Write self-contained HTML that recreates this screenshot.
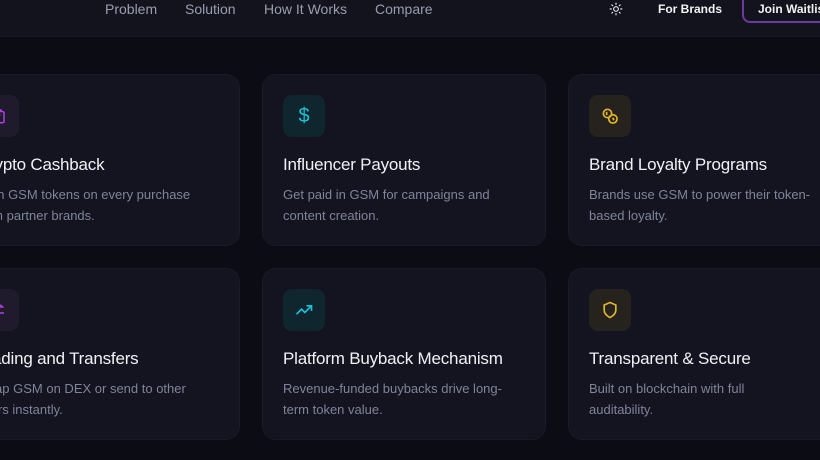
<!DOCTYPE html>
<html><head><meta charset="utf-8"><style>
*{margin:0;padding:0;box-sizing:border-box}
body{width:820px;height:460px;overflow:hidden;background:#0c0d14;font-family:"Liberation Sans",sans-serif;position:relative}
.hdr{position:absolute;left:0;top:0;width:820px;height:37px;background:#12131c;border-bottom:1px solid #171823}
.nav{position:absolute;top:1px;font-size:14px;color:#9a9db0}
.fb{position:absolute;left:658px;top:2px;font-size:12px;font-weight:bold;color:#f2f2f5}
.jw{position:absolute;left:742px;top:-10px;width:110px;height:33px;border:2px solid #6b3aa0;border-radius:8px;color:#f2f2f5;font-size:12px;font-weight:bold;padding:10px 0 0 14px}
.card{position:absolute;width:284px;height:172px;background:#131420;border:1px solid #191a26;border-radius:14px}
.ic{position:absolute;left:20px;top:20px;width:42px;height:42px;border-radius:9px;display:flex;align-items:center;justify-content:center}
.t{position:absolute;left:20px;top:80px;font-size:17px;color:#f1f1f5;white-space:nowrap;letter-spacing:-0.2px}
.d{position:absolute;left:20px;top:109px;font-size:13px;line-height:21px;color:#80849a;white-space:nowrap}
.p{background:#1f1b2c}.c{background:#10262f}.y{background:#26231e}
</style></head><body>
<div class="hdr">
<span class="nav" style="left:105px">Problem</span>
<span class="nav" style="left:185px">Solution</span>
<span class="nav" style="left:264px">How It Works</span>
<span class="nav" style="left:375px">Compare</span>
<svg style="position:absolute;left:609px;top:2px" width="14" height="14" viewBox="0 0 24 24" fill="none" stroke="#e6e6ee" stroke-width="2" stroke-linecap="round"><circle cx="12" cy="12" r="4"/><path d="M12 2v2M12 20v2M4.9 4.9l1.4 1.4M17.7 17.7l1.4 1.4M2 12h2M20 12h2M4.9 19.1l1.4-1.4M17.7 6.3l1.4-1.4"/></svg>
<span class="fb">For Brands</span>
<div class="jw">Join Waitlist</div>
</div>

<div class="card" style="left:-44px;top:74px"><div class="ic p"><svg width="18" height="18" viewBox="0 0 24 24" fill="none" stroke="#b040e0" stroke-width="2"><rect x="4" y="6" width="16" height="15" rx="2"/><path d="M8 6V4h8v2M9 12l2 2 4-4"/></svg></div>
<div class="t">Crypto Cashback</div><div class="d">Earn GSM tokens on every purchase<br>from partner brands.</div></div>

<div class="card" style="left:262px;top:74px"><div class="ic c"><span style="color:#19c3dc;font-size:20px">$</span></div>
<div class="t">Influencer Payouts</div><div class="d">Get paid in GSM for campaigns and<br>content creation.</div></div>

<div class="card" style="left:568px;top:74px"><div class="ic y"><svg width="20" height="20" viewBox="0 0 24 24" fill="none" stroke="#e2b52a" stroke-width="2"><circle cx="9" cy="9" r="5"/><circle cx="15.5" cy="15.5" r="5"/><path d="M8 7v4M15 14l2 3"/></svg></div>
<div class="t">Brand Loyalty Programs</div><div class="d">Brands use GSM to power their token-<br>based loyalty.</div></div>

<div class="card" style="left:-44px;top:268px"><div class="ic p"><svg width="18" height="18" viewBox="0 0 24 24" fill="none" stroke="#b040e0" stroke-width="2"><path d="M4 8h14l-3-3M20 16H6l3 3"/></svg></div>
<div class="t">Trading and Transfers</div><div class="d">Swap GSM on DEX or send to other<br>users instantly.</div></div>

<div class="card" style="left:262px;top:268px"><div class="ic c"><svg width="20" height="20" viewBox="0 0 24 24" fill="none" stroke="#19c3dc" stroke-width="2"><path d="M3 17l6-6 4 4 8-8M15 7h6v6"/></svg></div>
<div class="t">Platform Buyback Mechanism</div><div class="d">Revenue-funded buybacks drive long-<br>term token value.</div></div>

<div class="card" style="left:568px;top:268px"><div class="ic y"><svg width="20" height="20" viewBox="0 0 24 24" fill="none" stroke="#e2b52a" stroke-width="2"><path d="M12 3l7 3v6c0 4-3 7-7 9-4-2-7-5-7-9V6z"/></svg></div>
<div class="t">Transparent &amp; Secure</div><div class="d">Built on blockchain with full<br>auditability.</div></div>
</body></html>
